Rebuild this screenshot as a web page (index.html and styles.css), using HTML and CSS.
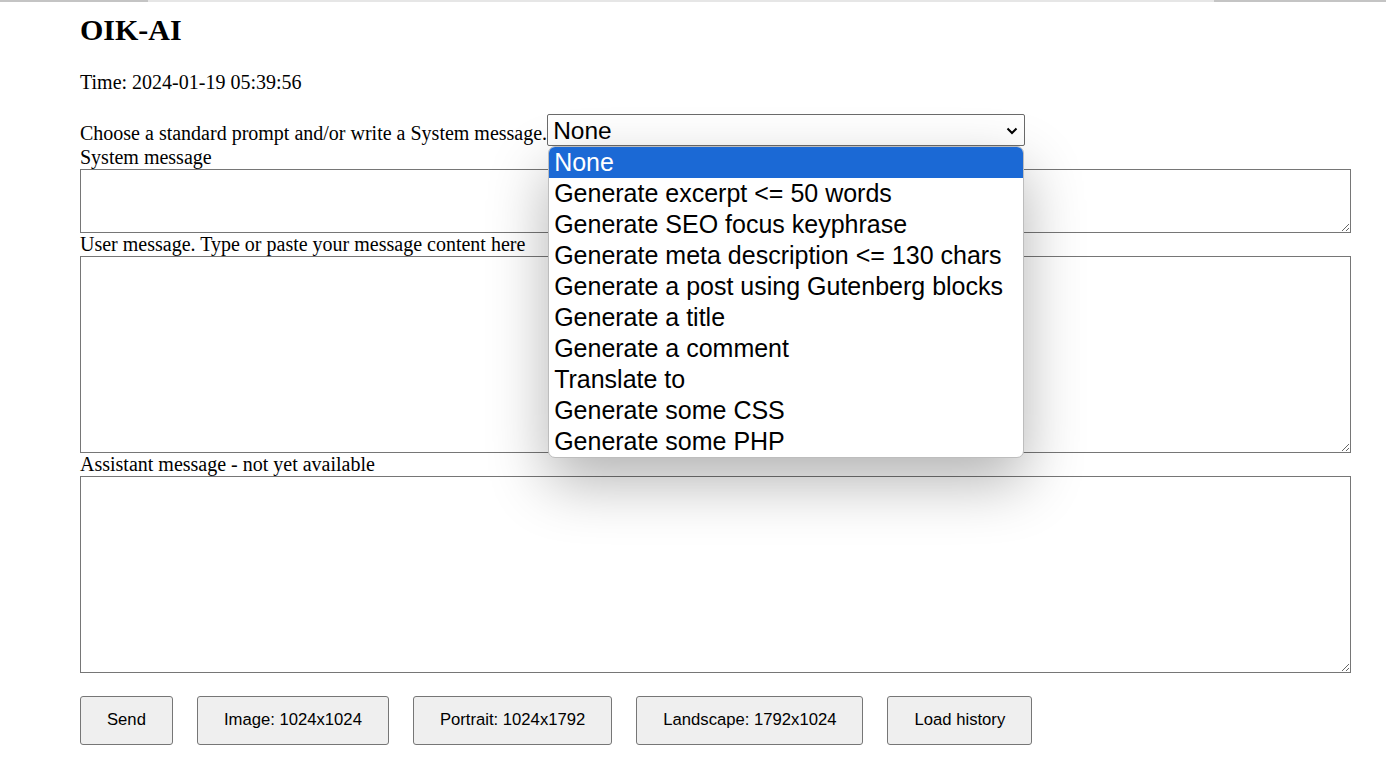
FILE: index.html
```html
<!DOCTYPE html>
<html lang="en">
<head>
<meta charset="utf-8">
<title>OIK-AI</title>
<link rel="stylesheet" href="styles.css">
</head>
<body>
<div class="topstrip"><span class="seg-a"></span><span class="seg-b"></span><span class="seg-c"></span></div>
<div class="page">
  <h2 class="title">OIK-AI</h2>
  <p class="time">Time: 2024-01-19 05:39:56</p>
  <div class="choose-row">
    <span class="choose-text">Choose a standard prompt and/or write a System message.</span>
    <div class="select-wrap">
      <div class="select-box">
        <span class="select-value">None</span>
        <svg class="chevron" width="12" height="8" viewBox="0 0 12 8"><path d="M1.5 1.5 L6 6 L10.5 1.5" fill="none" stroke="#000" stroke-width="2"/></svg>
      </div>
      <ul class="dropdown">
        <li class="opt opt-selected">None</li>
        <li class="opt">Generate excerpt &lt;= 50 words</li>
        <li class="opt">Generate SEO focus keyphrase</li>
        <li class="opt">Generate meta description &lt;= 130 chars</li>
        <li class="opt">Generate a post using Gutenberg blocks</li>
        <li class="opt">Generate a title</li>
        <li class="opt">Generate a comment</li>
        <li class="opt">Translate to</li>
        <li class="opt">Generate some CSS</li>
        <li class="opt">Generate some PHP</li>
      </ul>
    </div>
  </div>
  <label class="field-label">System message</label>
  <textarea class="ta ta-system"></textarea>
  <label class="field-label">User message. Type or paste your message content here</label>
  <textarea class="ta ta-big"></textarea>
  <label class="field-label">Assistant message - not yet available</label>
  <textarea class="ta ta-big"></textarea>
  <div class="buttons">
    <button class="btn">Send</button>
    <button class="btn">Image: 1024x1024</button>
    <button class="btn">Portrait: 1024x1792</button>
    <button class="btn">Landscape: 1792x1024</button>
    <button class="btn">Load history</button>
  </div>
</div>
</body>
</html>
```
FILE: styles.css
```css
html, body {
  margin: 0;
  padding: 0;
  background: #fff;
}
body {
  font-family: "Liberation Serif", "Times New Roman", serif;
  font-size: 20px;
  line-height: 23px;
  color: #000;
}
.topstrip {
  position: fixed;
  top: 0;
  left: 0;
  right: 0;
  height: 2px;
  display: flex;
}
.seg-a { width: 148px; background: #c4c4c4; }
.seg-b { flex: 1; background: #e6e6e6; }
.seg-c { width: 172px; background: #c4c4c4; }
.page {
  padding: 0 35px 0 80px;
}
.title {
  font-size: 30px;
  font-weight: bold;
  line-height: 34px;
  margin: 13px 0 24px;
}
.time {
  margin: 0 0 20px;
}
.choose-row {
  display: flex;
  align-items: baseline;
}
.choose-text {
  white-space: nowrap;
  position: relative;
  top: 1px;
}
.select-wrap {
  position: relative;
}
.select-box {
  box-sizing: border-box;
  width: 478px;
  height: 32px;
  border: 1px solid #6b6b6b;
  border-radius: 2px;
  display: flex;
  align-items: baseline;
  justify-content: space-between;
  padding: 1px 6px 0 5px;
  font-family: "Liberation Sans", Arial, sans-serif;
  font-size: 24.5px;
  line-height: 30px;
}
.chevron {
  align-self: center;
  margin-top: 1px;
}
.dropdown {
  position: absolute;
  top: 32px;
  left: 1px;
  width: 476px;
  box-sizing: border-box;
  margin: 0;
  padding: 0;
  list-style: none;
  background: #fff;
  border: 1px solid #bdbdbd;
  border-radius: 7px;
  overflow: hidden;
  box-shadow: 0 24px 60px rgba(0, 0, 0, 0.3);
  font-family: "Liberation Sans", Arial, sans-serif;
  font-size: 25px;
  z-index: 5;
}
.opt {
  height: 31px;
  line-height: 31px;
  padding-left: 5px;
  white-space: nowrap;
  color: #000;
}
.opt-selected {
  background: #1b69d5;
  color: #fff;
}
.field-label {
  display: block;
}
.ta {
  display: block;
  box-sizing: border-box;
  width: 100%;
  margin: 0;
  border: 1px solid #767676;
  border-radius: 0;
  background: #fff;
  padding: 2px;
}
.ta-system { height: 64px; }
.ta-big { height: 197px; }
.buttons {
  display: flex;
  gap: 24px;
  margin-top: 23px;
}
.btn {
  box-sizing: border-box;
  height: 49px;
  padding: 0 26px 2px;
  border: 1px solid #767676;
  border-radius: 3px;
  background: #efefef;
  font-family: "Liberation Sans", Arial, sans-serif;
  font-size: 16.67px;
  color: #000;
}
```
